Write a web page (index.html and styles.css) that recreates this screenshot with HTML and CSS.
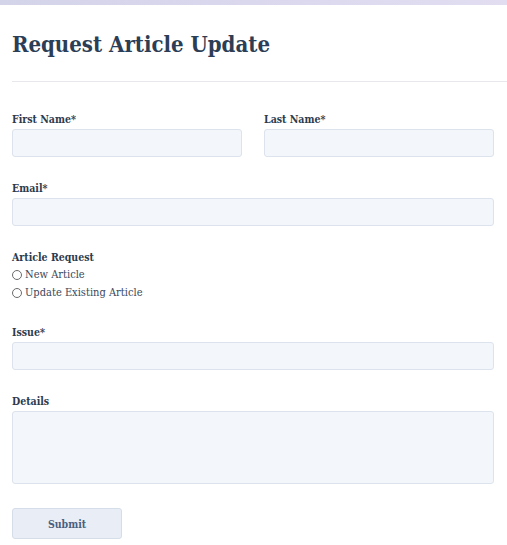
FILE: index.html
```html
<!DOCTYPE html>
<html lang="en">
<head>
    <meta charset="UTF-8">
    <meta name="viewport" content="width=device-width, initial-scale=1.0">
    <title>Request Article Update</title>
    <link rel="stylesheet" href="styles.css">
</head>
<body>
    <div class="top-bar"></div>
    <div class="page">
        <h1>Request Article Update</h1>
        <hr class="divider">
        <form class="request-form">
            <div class="row">
                <div class="field">
                    <label for="firstName">First Name*</label>
                    <input type="text" id="firstName">
                </div>
                <div class="field">
                    <label for="lastName">Last Name*</label>
                    <input type="text" id="lastName">
                </div>
            </div>
            <div class="field">
                <label for="email">Email*</label>
                <input type="text" id="email">
            </div>
            <div class="field radio-group">
                <span class="group-label">Article Request</span>
                <label class="radio"><input type="radio" name="kind"> New Article</label>
                <label class="radio"><input type="radio" name="kind"> Update Existing Article</label>
            </div>
            <div class="field">
                <label for="issue">Issue*</label>
                <input type="text" id="issue">
            </div>
            <div class="field">
                <label for="details">Details</label>
                <textarea id="details"></textarea>
            </div>
            <button type="button">Submit</button>
        </form>
    </div>
</body>
</html>
```

FILE: styles.css
```css
body {
    margin: 0;
    font-family: "DejaVu Serif Condensed", "DejaVu Serif", serif;
    background: #fff;
    color: #2d3b4e;
}
.top-bar {
    height: 5px;
    background: linear-gradient(90deg, #d3d3ea, #e2ddf1);
}
.page {
    padding: 0 13px 0 12px;
}
h1 {
    margin: 0;
    padding-top: 24px;
    font-size: 22px;
    font-weight: bold;
    color: #2c3e55;
    line-height: 30px;
}
.divider {
    border: none;
    border-top: 1px solid #e6e8ec;
    margin: 22px -13px 0 0;
}
.request-form {
    padding-top: 30px;
}
.row {
    display: flex;
    gap: 22px;
}
.row .field {
    flex: 1;
}
.field {
    margin-bottom: 24px;
}
.field label, .group-label {
    display: block;
    font-size: 10.5px;
    font-weight: bold;
    line-height: 15px;
    margin-bottom: 2px;
    color: #2d3b4e;
}
input[type="text"], textarea {
    display: block;
    box-sizing: border-box;
    width: 100%;
    height: 28px;
    background: #f3f6fa;
    border: 1px solid #dde3ec;
    border-radius: 3px;
    margin: 0;
}
textarea {
    height: 73px;
    resize: none;
}
.group-label {
    margin-bottom: 1px;
}
.radio-group {
    margin-bottom: 23px;
}
.field label.radio {
    font-size: 11px;
    font-weight: normal;
    display: flex;
    align-items: center;
    gap: 3px;
    margin: 0;
    line-height: 18px;
    color: #3a4759;
}
.radio input {
    appearance: none;
    box-sizing: border-box;
    margin: 0;
    width: 10px;
    height: 10px;
    border: 1px solid #6b6b6b;
    border-radius: 50%;
    background: #fff;
}
button {
    display: block;
    width: 110px;
    height: 31px;
    margin-top: 24px;
    background: #e9eef6;
    border: 1px solid #d5dde9;
    border-radius: 3px;
    font-family: inherit;
    font-size: 10.5px;
    font-weight: bold;
    color: #4a5f80;
}
```
